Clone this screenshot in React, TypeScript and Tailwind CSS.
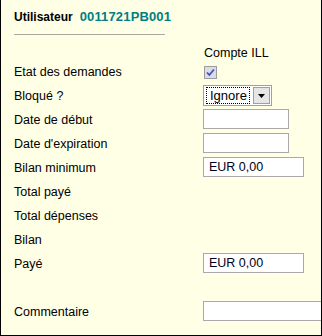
const font = { fontFamily: '"Liberation Sans", Arial, sans-serif' };

type Row = { label: string; field?: React.ReactNode };

function TextBox({ value = "", width }: { value?: string; width: number }) {
  return (
    <div
      className="flex h-[20px] shrink-0 items-center border border-[#a9a9a9] bg-white pl-[5px] text-[12.5px] text-[#00001a]"
      style={{ width }}
    >
      {value}
    </div>
  );
}

function CheckBox() {
  return (
    <svg width="13" height="13" viewBox="0 0 13 13" className="mt-[5px] ml-px">
      <rect x="0.5" y="0.5" width="12" height="12" fill="#dcdce4" stroke="#9c9c9c" />
      <path d="M3 6.5 L5.3 9 L10 3.5" fill="none" stroke="#3a55b8" strokeWidth="1.8" />
    </svg>
  );
}

function SelectBox() {
  return (
    <div className="flex h-[21px] w-[69px] items-stretch border border-[#a0a0a0] bg-white p-px">
      <div className="flex flex-1 items-center">
        <span className="ml-px flex h-[17px] items-center border border-dotted border-black pr-[2px] pl-[3px] text-[13px] leading-none">
          Ignore
        </span>
      </div>
      <div className="flex w-[17px] items-center justify-center border border-[#a0a0a0] bg-[#e6e6e6]">
        <svg width="7" height="4" viewBox="0 0 7 4">
          <path d="M0 0 H7 L3.5 4 Z" fill="#000" />
        </svg>
      </div>
    </div>
  );
}

const rows: Row[] = [
  { label: "Etat des demandes", field: <CheckBox /> },
  { label: "Bloqué ?", field: <SelectBox /> },
  { label: "Date de début", field: <TextBox width={86} /> },
  { label: "Date d'expiration", field: <TextBox width={86} /> },
  { label: "Bilan minimum", field: <TextBox width={101} value="EUR 0,00" /> },
  { label: "Total payé" },
  { label: "Total dépenses" },
  { label: "Bilan" },
  { label: "Payé", field: <TextBox width={101} value="EUR 0,00" /> },
  { label: "" },
  { label: "Commentaire", field: <TextBox width={140} /> },
];

export default function App() {
  return (
    <div
      className="h-[336px] w-[322px] overflow-hidden border-r border-b border-l border-black bg-[#ffffe6] pl-[13px] text-black"
      style={font}
    >
      <div className="flex items-baseline gap-[7px] pt-[9px] text-[12px] leading-4 font-bold">
        <span>Utilisateur</span>
        <span className="text-[13px] tracking-[0.15px] text-[#008080]">0011721PB001</span>
      </div>
      <div className="mt-[9px] h-px w-[151px] bg-[#a8a8a0]" />
      <div className="mt-[11px] flex h-[14px] text-[12.5px] leading-[14px]">
        <span className="w-[190px]" />
        <span>Compte ILL</span>
      </div>
      {rows.map((r, i) => (
        <div key={i} className="flex h-6 items-start text-[12.5px]">
          <span className="w-[189px] shrink-0 leading-6">{r.label}</span>
          <div className="pt-px">{r.field}</div>
        </div>
      ))}
    </div>
  );
}
